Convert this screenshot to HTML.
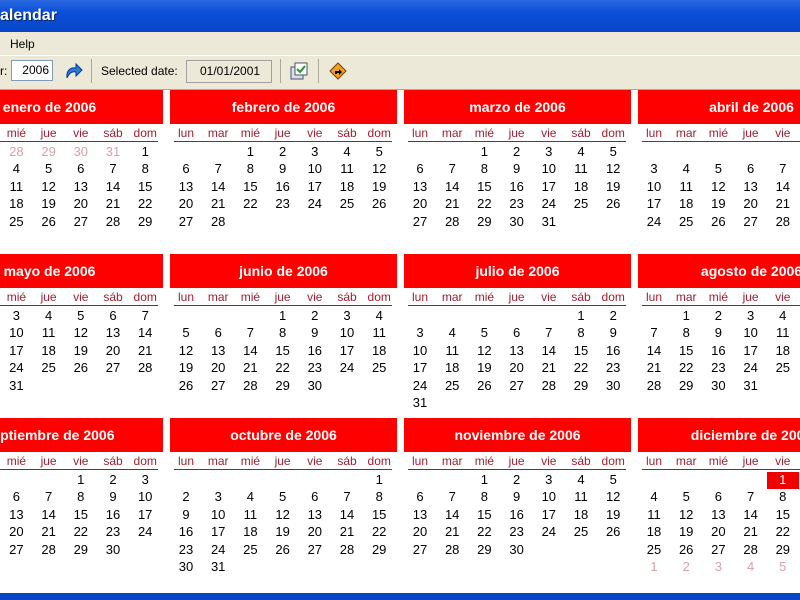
<!DOCTYPE html>
<html><head><meta charset="utf-8"><style>
html,body{margin:0;width:800px;height:600px;overflow:hidden}
body{background:#fff;font-family:"Liberation Sans",Arial,sans-serif;position:relative}
.a{position:absolute}
#title{left:0;top:0;width:800px;height:32px;background:linear-gradient(#2a68e0,#0a4ed8 40%,#0846c8);}
#title span{position:absolute;left:0;top:7px;color:#fff;font-weight:bold;font-size:16px;text-shadow:1px 1px #0a246a}
#menu{left:0;top:32px;width:800px;height:23px;background:#ece9d8;font-size:12px}
#tool{left:0;top:55px;width:800px;height:33px;background:#ece9d8;border-top:1px solid #fff;border-bottom:1px solid #aca899;font-size:12px}
#cal{position:absolute;left:0;top:0;width:800px;height:600px;overflow:hidden}
.hd{background:#f00;color:#fff;font-weight:bold;font-size:14px;text-align:center;height:34px;line-height:34px;width:227px}
.dn{color:#a02030;font-size:12px;width:32px;text-align:center}
.d{font-size:13px;width:32px;text-align:center;color:#000}
.o{color:#d8a0a8}
.ln{height:1px;background:#444;width:218px}
</style></head><body>
<div id="title" class="a"><span>alendar</span></div>
<div id="menu" class="a"><span class="a" style="left:10px;top:5px">Help</span></div>
<div id="tool" class="a">
<span class="a" style="left:0;top:8px">r:</span>
<div class="a" style="left:11px;top:4px;height:21px;background:#fff;border:1px solid #7f9db9;text-align:right;line-height:19px;box-sizing:border-box;padding-right:3px;width:42px">2006</div>
<svg class="a" style="left:63px;top:5px" width="20" height="20" viewBox="0 0 20 20"><path d="M4 17 C3 9 8 6 13 7 L13 3 L19 9 L13 15 L13 11 C9 10 6 12 4 17Z" fill="#2a7ad8" stroke="#0a3a90" stroke-width="1"/></svg>
<div class="a" style="left:91px;top:3px;width:1px;height:24px;background:#aca899"></div>
<span class="a" style="left:101px;top:8px">Selected date:</span>
<div class="a" style="left:186px;top:4px;width:86px;height:23px;background:#ece9d8;border:1px solid #a0a0a0;box-sizing:border-box;line-height:21px;padding-left:13px">01/01/2001</div>
<div class="a" style="left:280px;top:3px;width:1px;height:24px;background:#aca899"></div>
<svg class="a" style="left:289px;top:5px" width="20" height="20" viewBox="0 0 20 20"><rect x="2" y="6" width="12" height="12" fill="#dde" stroke="#456"/><rect x="6" y="2" width="12" height="12" fill="#fff" stroke="#456"/><path d="M8 8 L11 11 L16 5" stroke="#1a9a2a" stroke-width="2" fill="none"/></svg>
<div class="a" style="left:318px;top:3px;width:1px;height:24px;background:#aca899"></div>
<svg class="a" style="left:328px;top:5px" width="20" height="20" viewBox="0 0 20 20"><path d="M10 2 L18 10 L10 18 L2 10Z" fill="#f0a020" stroke="#704000"/><path d="M7 13 L7 10 L11 10 L11 8 L14 11 L11 14 L11 12 L9 12 L9 13Z" fill="#000"/></svg>
</div>
<div id="cal"></div>
<div class="a" style="left:0;top:593px;width:800px;height:7px;background:#0846c8"></div>
<script>
var names=["enero","febrero","marzo","abril","mayo","junio","julio","agosto","septiembre","octubre","noviembre","diciembre"];
var start=[6,2,2,5,0,3,5,1,4,6,2,4],len=[31,28,31,30,31,30,31,31,30,31,30,31];
var dn=["lun","mar","mié","jue","vie","sáb","dom"];
var h="";
for(var m=0;m<12;m++){
 var c=m%4,r=Math.floor(m/4);
 var x=-64+234*c,y=90+164*r;
 h+='<div class="a hd" style="left:'+x+'px;top:'+y+'px">'+names[m]+' de 2006</div>';
 for(var k=0;k<7;k++)h+='<div class="a dn" style="left:'+(x+k*32.2)+'px;top:'+(y+36)+'px">'+dn[k]+'</div>';
 h+='<div class="a ln" style="left:'+(x+4)+'px;top:'+(y+51)+'px"></div>';
 var cells=[];
 if(m==0){for(var i=26;i<=31;i++)cells.push([i,1]);}
 else for(var i=0;i<start[m];i++)cells.push(null);
 for(var i=1;i<=len[m];i++)cells.push([i,0]);
 if(m==11){for(var i=1;i<=7;i++)cells.push([i,1]);}
 for(var i=0;i<cells.length;i++){if(!cells[i])continue;
  var col=i%7,row=Math.floor(i/7);
  var st='left:'+(x+col*32.2)+'px;top:'+(y+54+row*17.4)+'px';
  var cls='a d'+(cells[i][1]?' o':'');
  if(m==11&&cells[i][0]==1&&!cells[i][1]){st+=';background:#e00;color:#fff;height:17px';}
  h+='<div class="'+cls+'" style="'+st+'">'+cells[i][0]+'</div>';}
}
document.getElementById('cal').innerHTML=h;
</script>
</body></html>
